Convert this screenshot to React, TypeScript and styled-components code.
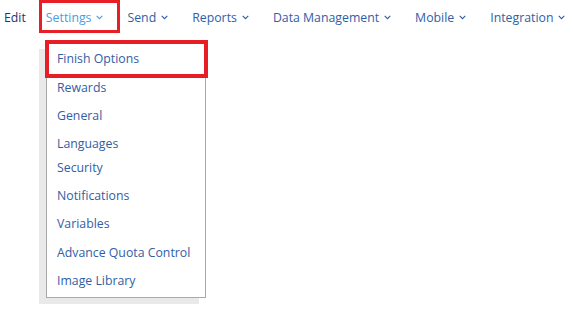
import React from 'react'
import styled, { createGlobalStyle } from 'styled-components'

const GlobalStyle = createGlobalStyle`
  html, body {
    margin: 0;
    padding: 0;
    background: #ffffff;
  }
  body {
    font-family: 'Open Sans', 'Noto Sans', Arial, sans-serif;
    -webkit-font-smoothing: antialiased;
  }
`

const Page = styled.div`
  position: relative;
  width: 573px;
  height: 312px;
  overflow: hidden;
`

const NavBar = styled.nav`
  display: flex;
  align-items: center;
  height: 34px;
  padding-left: 4px;
`

const NavItem = styled.div<{ active?: boolean; strong?: boolean; highlighted?: boolean }>`
  position: relative;
  display: flex;
  align-items: center;
  gap: 5px;
  height: 34px;
  padding: 0 12px;
  font-size: 12.3px;
  color: ${({ active, strong }) => (active ? '#4a9de0' : strong ? '#1c3470' : '#2f5ea6')};
  cursor: pointer;
  white-space: nowrap;

  &:first-child {
    padding-left: 0;
    padding-right: 8px;
  }

  ${({ highlighted }) =>
    highlighted &&
    `
    &::after {
      content: '';
      position: absolute;
      left: 5px;
      right: -5px;
      top: 0;
      bottom: 1px;
      border: 3px solid #e81e27;
      pointer-events: none;
    }
  `}
`

const Chevron = styled.svg`
  width: 7px;
  height: 5px;
  flex-shrink: 0;
  margin-top: 1px;
`

const Dropdown = styled.ul`
  position: absolute;
  top: 43px;
  left: 46px;
  width: 158px;
  margin: 0;
  padding: 1px 0 2px 0;
  list-style: none;
  background: #ffffff;
  border: 1px solid #a9a9a9;
  border-top-color: transparent;
  box-shadow: -7px 6px 0 #e9e9e9;
`

const MenuItem = styled.li<{ tight?: boolean; highlighted?: boolean }>`
  position: relative;
  padding: ${({ tight }) => (tight ? '5.2px 10px 0 10px' : '5.2px 10px')};
  font-size: 12.3px;
  line-height: 18px;
  color: #325ea5;
  white-space: nowrap;
  cursor: pointer;

  ${({ highlighted }) =>
    highlighted &&
    `
    &::after {
      content: '';
      position: absolute;
      left: -2px;
      right: -3px;
      top: -5px;
      bottom: -5px;
      border: 4px solid #e81e27;
      pointer-events: none;
    }
  `}
`

const ChevronDown = () => (
  <Chevron viewBox="0 0 7 5">
    <polyline points="0.7,0.9 3.5,3.7 6.3,0.9" fill="none" stroke="currentColor" strokeWidth="1.1" />
  </Chevron>
)

const navItems = ['Settings', 'Send', 'Reports', 'Data Management', 'Mobile', 'Integration']

const menuItems = [
  'Finish Options',
  'Rewards',
  'General',
  'Languages',
  'Security',
  'Notifications',
  'Variables',
  'Advance Quota Control',
  'Image Library'
]

export default function App() {
  return (
    <Page>
      <GlobalStyle />
      <NavBar>
        <NavItem strong>Edit</NavItem>
        {navItems.map(item => (
          <NavItem key={item} active={item === 'Settings'} highlighted={item === 'Settings'}>
            {item}
            <ChevronDown />
          </NavItem>
        ))}
      </NavBar>
      <Dropdown>
        {menuItems.map(item => (
          <MenuItem key={item} tight={item === 'Languages'} highlighted={item === 'Finish Options'}>
            {item}
          </MenuItem>
        ))}
      </Dropdown>
    </Page>
  )
}
